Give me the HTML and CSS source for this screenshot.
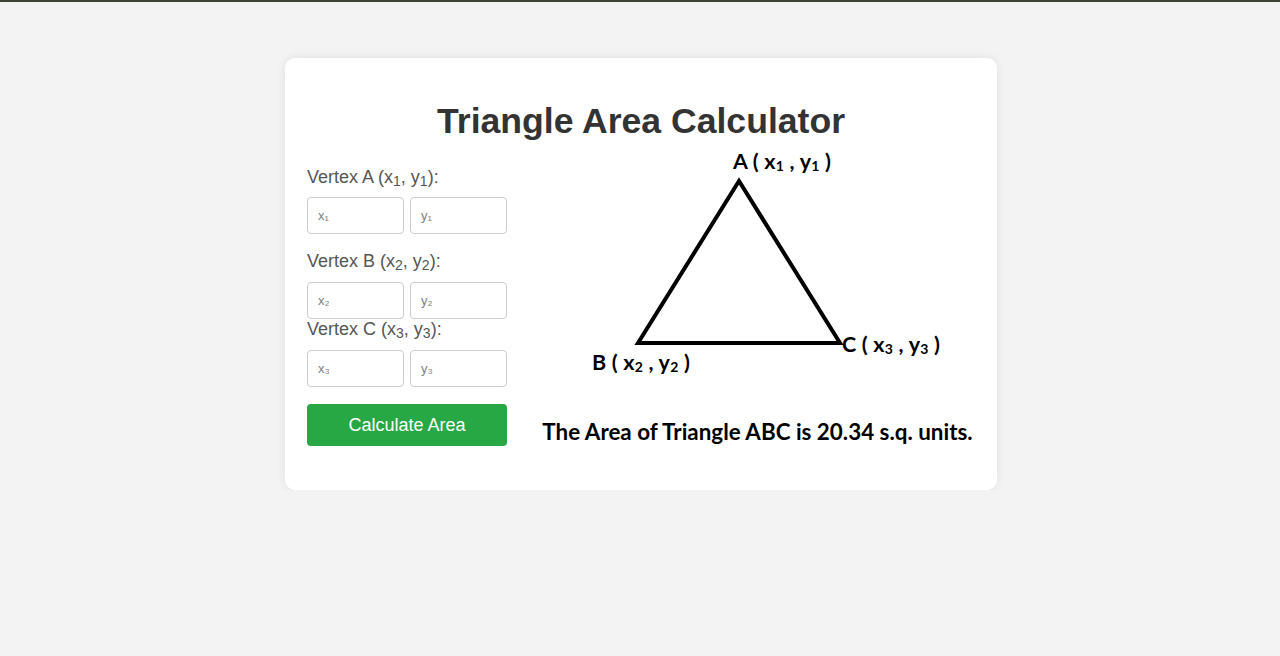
FILE: index.html
```html
<!DOCTYPE html>
<html lang="en">
<head>
<meta charset="utf-8">
<title>Triangle Area Calculator</title>
<link rel="stylesheet" href="styles.css">
</head>
<body>
<div class="topbar"></div>
<main class="page">
  <section class="card">
    <h1 class="title">Triangle Area Calculator</h1>
    <div class="content">
      <form class="form">
        <label class="label">Vertex A (x<sub>1</sub>, y<sub>1</sub>):</label>
        <div class="pair">
          <input class="field" type="text" placeholder="x₁">
          <input class="field" type="text" placeholder="y₁">
        </div>
        <label class="label label-b">Vertex B (x<sub>2</sub>, y<sub>2</sub>):</label>
        <div class="pair">
          <input class="field" type="text" placeholder="x₂">
          <input class="field" type="text" placeholder="y₂">
        </div>
        <label class="label label-c">Vertex C (x<sub>3</sub>, y<sub>3</sub>):</label>
        <div class="pair">
          <input class="field" type="text" placeholder="x₃">
          <input class="field" type="text" placeholder="y₃">
        </div>
        <button class="btn" type="button">Calculate Area</button>
      </form>
      <div class="figure">
        <svg class="diagram" width="435" height="235" viewBox="0 0 435 235">
          <polygon points="199,36 98,198 300,198" fill="none" stroke="#000" stroke-width="4" stroke-linejoin="miter"/>
          <text class="vlabel" x="193" y="24">A ( x<tspan class="sb" dy="2">1</tspan><tspan dy="-2"> , y</tspan><tspan class="sb" dy="2">1</tspan><tspan dy="-2"> )</tspan></text>
          <text class="vlabel" x="52" y="225">B ( x<tspan class="sb" dy="2">2</tspan><tspan dy="-2"> , y</tspan><tspan class="sb" dy="2">2</tspan><tspan dy="-2"> )</tspan></text>
          <text class="vlabel" x="302" y="207">C ( x<tspan class="sb" dy="2">3</tspan><tspan dy="-2"> , y</tspan><tspan class="sb" dy="2">3</tspan><tspan dy="-2"> )</tspan></text>
        </svg>
        <p class="result">The Area of Triangle ABC is 20.34 s.q. units.</p>
      </div>
    </div>
  </section>
</main>
</body>
</html>
```

FILE: styles.css
```css
* { box-sizing: border-box; }

html, body {
  margin: 0;
  padding: 0;
  background: #f3f3f3;
  font-family: "Liberation Sans", Arial, sans-serif;
}

.topbar {
  height: 2px;
  background: #3d4237;
}

.page {
  padding-top: 56px;
  padding-left: 2px;
  display: flex;
  justify-content: center;
}

.card {
  width: 712px;
  background: #ffffff;
  border-radius: 10px;
  box-shadow: 0 0 10px rgba(0, 0, 0, 0.08);
  padding: 20px 22px 44px;
}

.title {
  margin: 23px 0 3px;
  text-align: center;
  font-size: 35.6px;
  line-height: 41px;
  font-weight: bold;
  color: #333333;
}

.content {
  display: flex;
  gap: 33px;
}

.form {
  width: 200px;
  flex: none;
  padding-top: 22px;
  display: flex;
  flex-direction: column;
}

.label {
  display: block;
  font-size: 18px;
  line-height: 21px;
  color: #555555;
  margin-bottom: 9px;
}

.label sub {
  font-size: 14px;
  line-height: 0;
  vertical-align: -3px;
}

.label-b { margin-top: 17px; margin-bottom: 10px; }
.label-c { margin-top: 0; margin-bottom: 10px; }

.pair {
  display: flex;
  gap: 6px;
}

.field {
  width: 97px;
  height: 37px;
  padding: 0 10px;
  border: 1px solid #cccccc;
  border-radius: 4px;
  font-family: "Liberation Sans", Arial, sans-serif;
  font-size: 13px;
  color: #333;
  background: #fff;
}

.field::placeholder {
  color: #808080;
}

.btn {
  margin-top: 17px;
  width: 200px;
  height: 42px;
  border: none;
  border-radius: 4px;
  background: #28a745;
  color: #ffffff;
  font-family: "Liberation Sans", Arial, sans-serif;
  font-size: 18px;
  cursor: pointer;
}

.figure {
  flex: 1;
  display: flex;
  flex-direction: column;
  align-items: center;
}

.diagram {
  display: block;
}

.vlabel {
  font-family: Lato, "Open Sans", sans-serif;
  font-weight: bold;
  font-size: 21.5px;
  letter-spacing: 0.2px;
  fill: #000;
}

.vlabel .sb {
  font-size: 14px;
}

.result {
  margin: 40px 0 0;
  font-family: Lato, "Open Sans", sans-serif;
  font-weight: bold;
  font-size: 22.4px;
  line-height: 24px;
  color: #000;
  text-align: center;
  white-space: nowrap;
}
```
